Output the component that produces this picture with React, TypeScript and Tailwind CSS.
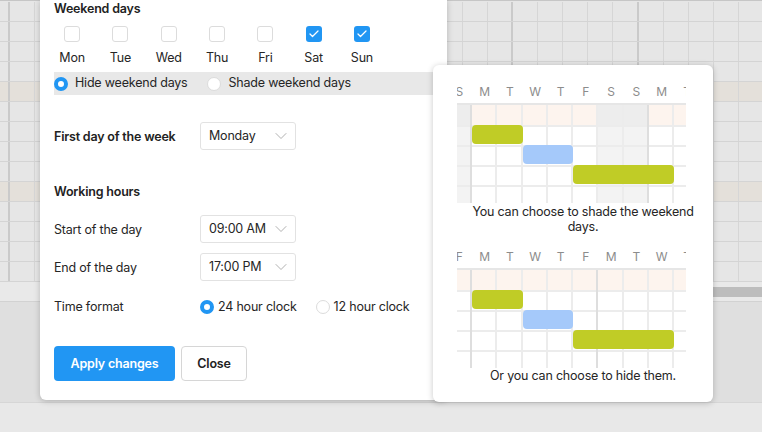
import { ChevronDown, Check } from "lucide-react";
import clsx from "clsx";

const days = ["Mon", "Tue", "Wed", "Thu", "Fri", "Sat", "Sun"];

function Radio({ on }: { on?: boolean }) {
  return on ? (
    <span className="w-[14px] h-[14px] rounded-full border-[4.5px] border-[#2196f3] bg-white shrink-0" />
  ) : (
    <span className="w-[14px] h-[14px] rounded-full border border-[#dcdcdc] bg-white shrink-0" />
  );
}

function Select({ value }: { value: string }) {
  return (
    <div className="w-[96px] h-[28px] border border-[#e2e2e2] rounded-[3px] bg-white flex items-center justify-between pl-[8px] pr-[4px] text-[#262626]">
      <span>{value}</span>
      <ChevronDown size={20} strokeWidth={1.1} className="text-[#a8a8a8]" />
    </div>
  );
}

type Col = { l: string; w?: boolean; dark?: boolean };

function Chart({ cols }: { cols: Col[] }) {
  return (
    <div className="ml-[24px] w-[229px] overflow-hidden">
      <div className="ml-[-10.3px] flex h-[14px] mb-[4px]">
        {cols.map((c, i) => (
          <div key={i} className="w-[25.3px] shrink-0 text-center text-[12px] leading-[14px] tracking-normal text-[#8c8c8c]">
            {c.l}
          </div>
        ))}
      </div>
      <div className="relative ml-[-10.3px] flex border-t-2 border-[#e6e6e6] h-[100px] overflow-hidden">
        {cols.map((c, i) => (
          <div
            key={i}
            className={clsx(
              "w-[25.3px] shrink-0 flex flex-col",
              c.dark ? "border-r-2 border-[#dedede]" : "border-r-2 border-[#ececec]"
            )}
          >
            <div className={clsx("h-[20px] shrink-0", c.w ? "bg-[#ededed]" : "bg-[#fdf4ee]")} />
            {[0, 1, 2, 3].map((r) => (
              <div
                key={r}
                className={clsx("h-[20px] shrink-0 border-t-2 border-[#ececec]", c.w ? "bg-[#f3f3f3]" : "bg-white")}
              />
            ))}
          </div>
        ))}
        <div className="absolute left-[25.3px] top-[20px] w-[51px] h-[19px] rounded-[4px] bg-[#c0cc26]" />
        <div className="absolute left-[76px] top-[40px] w-[50px] h-[19px] rounded-[4px] bg-[#a5c9fa]" />
        <div className="absolute left-[126.5px] top-[60px] w-[101px] h-[19px] rounded-[4px] bg-[#c0cc26]" />
      </div>
    </div>
  );
}

const chart1: Col[] = [
  { l: "S", w: true, dark: true },
  { l: "M" },
  { l: "T" },
  { l: "W" },
  { l: "T" },
  { l: "F" },
  { l: "S", w: true },
  { l: "S", w: true, dark: true },
  { l: "M" },
  { l: "T" },
];

const chart2: Col[] = [
  { l: "F", dark: true },
  { l: "M" },
  { l: "T" },
  { l: "W" },
  { l: "T" },
  { l: "F", dark: true },
  { l: "M" },
  { l: "T" },
  { l: "W" },
  { l: "T" },
];

export default function App() {
  const cols = Array.from({ length: 31 }, (_, i) => i);
  return (
    <div className="relative w-[762px] h-[432px] overflow-hidden bg-[#e6e6e6] font-['Inter','Liberation_Sans',sans-serif] text-[12.5px] tracking-[-0.2px]">
      {/* timeline grid behind */}
      <div className="h-[282px] pt-[1px] border-t border-[#c6c6c6] overflow-hidden">
        {Array.from({ length: 14 }).map((_, r) => (
          <div
            key={r}
            className={clsx(
              "flex h-[20px] ml-[-15.15px] border-b border-[#d4d4d4]",
              r === 4 || r === 9 ? "bg-[#e4e0da]" : "bg-[#e6e6e6]"
            )}
          >
            {cols.map((c) => (
              <div
                key={c}
                className={clsx(
                  "w-[25.15px] shrink-0",
                  c % 5 === 0 ? "border-r-2 border-[#cacaca]" : "border-r border-[#d6d6d6]"
                )}
              />
            ))}
          </div>
        ))}
      </div>
      <div className="h-[20px] bg-[#e9e9e9] border-b border-[#d2d2d2] flex justify-end pt-[5px]">
        <div className="w-[300px] h-[10px] bg-[#bdbdbd]" />
      </div>
      <div className="h-[100px] bg-[#dfdfdf]" />
      <div className="h-[30px] bg-[#e8e8e8] border-t border-[#d6d6d6]" />

      {/* settings dialog */}
      <div className="absolute left-[40px] top-0 w-[407px] h-[400px] bg-white rounded-b-[6px] shadow-[0_1px_6px_rgba(0,0,0,0.22)] px-[14px] pt-[1px] text-[#262626]">
        <div className="font-semibold leading-[16px] text-[#222]">Weekend days</div>
        <div className="flex ml-[-6px] mt-[9px]">
          {days.map((d) => {
            const on = d === "Sat" || d === "Sun";
            return (
              <div key={d} className="w-[48.3px] flex flex-col items-center">
                {on ? (
                  <span className="w-[16px] h-[16px] rounded-[3px] bg-[#2196f3] flex items-center justify-center">
                    <Check size={12} strokeWidth={2.5} className="text-white" />
                  </span>
                ) : (
                  <span className="w-[16px] h-[16px] rounded-[3px] border border-[#dcdcdc] bg-white" />
                )}
                <span className="mt-[8px] leading-[16px]">{d}</span>
              </div>
            );
          })}
        </div>
        <div className="mt-[6px] h-[23px] mr-[-14px] bg-[#e8e8e8] flex items-center">
          <Radio on />
          <span className="ml-[7px]">Hide weekend days</span>
          <span className="ml-[19px] flex items-center">
            <Radio />
            <span className="ml-[8px]">Shade weekend days</span>
          </span>
        </div>

        <div className="mt-[27px] flex items-center">
          <span className="w-[146px] font-semibold text-[#222] pt-[3px]">First day of the week</span>
          <Select value="Monday" />
        </div>

        <div className="mt-[34px] font-semibold leading-[16px] text-[#222]">Working hours</div>

        <div className="mt-[15px] flex items-center">
          <span className="w-[146px] pt-[2px]">Start of the day</span>
          <Select value="09:00 AM" />
        </div>
        <div className="mt-[10px] flex items-center">
          <span className="w-[146px] pt-[2px]">End of the day</span>
          <Select value="17:00 PM" />
        </div>

        <div className="mt-[18px] flex items-center h-[16px]">
          <span className="w-[146px]">Time format</span>
          <Radio on />
          <span className="ml-[4px]">24 hour clock</span>
          <span className="ml-[19px] flex items-center">
            <Radio />
            <span className="ml-[4px]">12 hour clock</span>
          </span>
        </div>

        <div className="mt-[31px] flex gap-[6px]">
          <button className="w-[121px] h-[35px] rounded-[4px] bg-[#2196f3] text-white font-semibold pt-[1px]">
            Apply changes
          </button>
          <button className="w-[66px] h-[35px] rounded-[4px] border border-[#d6d6d6] bg-white font-semibold text-[#222] pt-[1px]">
            Close
          </button>
        </div>
      </div>

      {/* hint popover */}
      <div className="absolute left-[433px] top-[65px] w-[280px] h-[337px] bg-white rounded-[6px] shadow-[0_1px_6px_rgba(0,0,0,0.22)] pt-[20px] text-[#262626]">
        <Chart cols={chart1} />
        <p className="ml-[34px] w-[232px] text-center leading-[15px] mt-[0.5px]">
          You can choose to shade the weekend days.
        </p>
        <div className="mt-[16.5px]">
          <Chart cols={chart2} />
        </div>
        <p className="ml-[34px] w-[232px] text-center leading-[15px] mt-[-0.5px]">
          Or you can choose to hide them.
        </p>
      </div>
    </div>
  );
}
